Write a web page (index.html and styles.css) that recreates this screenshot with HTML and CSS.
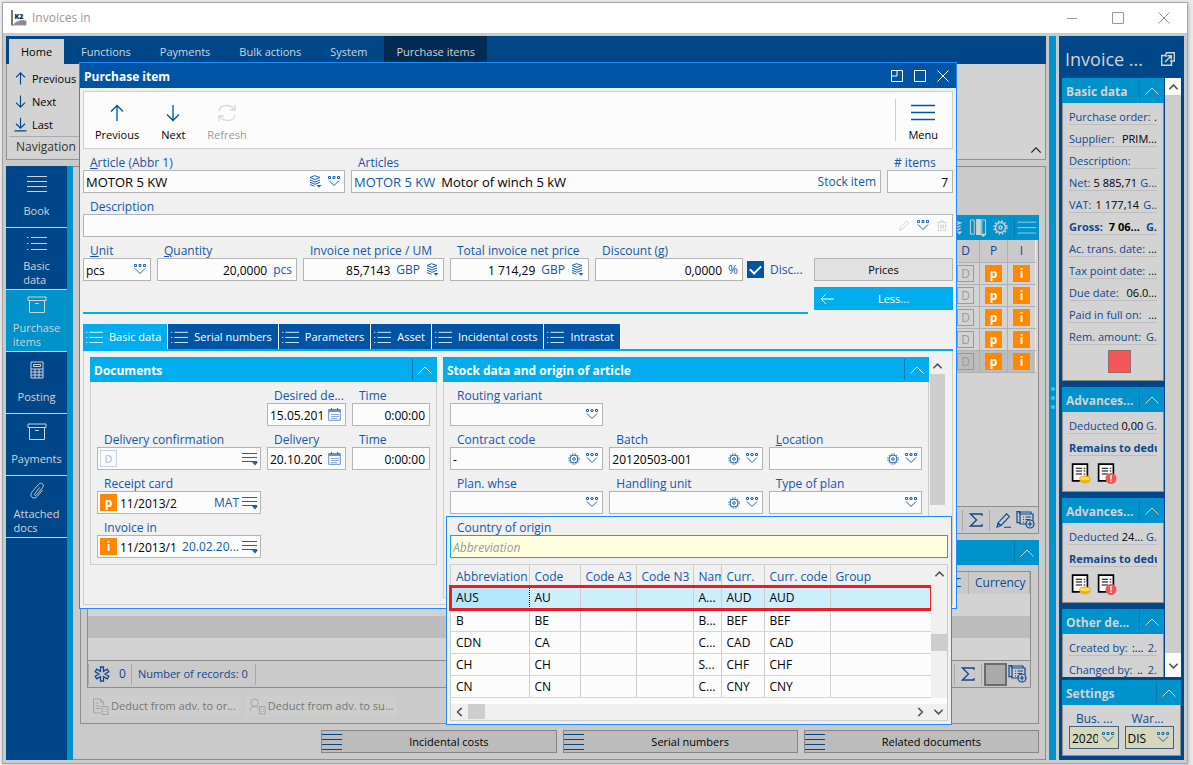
FILE: index.html
```html
<!DOCTYPE html>
<html lang="en">
<head>
<meta charset="utf-8">
<title>Invoices in</title>
<link rel="stylesheet" href="styles.css">
</head>
<body>
<svg class="defs" aria-hidden="true">
  <symbol id="up" viewBox="0 0 20 20"><path d="M10 18V2.500M4 8.500 10 2.500 16 8.500"/></symbol>
  <symbol id="down" viewBox="0 0 20 20"><path d="M10 2v15.500M4 11.500 10 17.500 16 11.500"/></symbol>
  <symbol id="last" viewBox="0 0 20 20"><path d="M10 1v13.500M4 9 10 15 16 9M2 18.500h16"/></symbol>
  <symbol id="left" viewBox="0 0 14 14"><path d="M14 7H1M6 2 1 7 6 12"/></symbol>
  <symbol id="refresh" viewBox="0 0 20 20"><path d="M2 8C3 1.500 13 .500 17 6.500M18 2v5h-5M18 12c-1 6.500-11 7.500-15 1.500M2 18v-5h5"/></symbol>
  <symbol id="lines" viewBox="0 0 24 18"><path d="M0 1.500h24M0 8.500h24M0 15.500h24"/></symbol>
  <symbol id="lines4" viewBox="0 0 20 18"><path d="M0 1.500h20M0 6.500h20M0 11.500h20M0 16.500h20"/></symbol>
  <symbol id="list" viewBox="0 0 20 14"><path d="M4 1.500h16M4 7.500h16M4 13.500h16M0 1.500h1.500M0 7.500h1.500M0 13.500h1.500"/></symbol>
  <symbol id="box" viewBox="0 0 20 18"><path d="M1 1h18v3.500H1zM2.500 4.500v12h15v-12M8 7.500h4"/></symbol>
  <symbol id="calc" viewBox="0 0 14 18"><path d="M1 1h12v16H1zM3.500 3.500h7v2h-7zM1 8h12M1 11h12M1 14h12M5 8v9M9 8v9"/></symbol>
  <symbol id="clip" viewBox="0 0 18 20"><path d="M12 6 6.500 13c-1 1.300.800 2.800 1.900 1.500L15 6.500c3-3.500-1.500-7-4.300-3.800L3.500 11c-4 4.800 2 9.500 5.800 5l6-7.200"/></symbol>
  <symbol id="chev" viewBox="0 0 14 8"><path d="M.500 7.500 7 1l6.500 6.500"/></symbol>
  <symbol id="drop" viewBox="0 0 12 11"><path d="M.500.500h2v2h-2zM5 .500h2v2H5zM9.500.500h2v2h-2zM1 4.500l5 5 5-5"/></symbol>
  <symbol id="stack" viewBox="0 0 13 13"><path d="M1 2.500 5.500.700 11 2.500 6 4.500zM1 5l5 2 5-2M1 7.300l5 2 5-2M1 9.500l4.500 1.800"/><path class="solid" d="M7.500 10h5L10 12.800z"/></symbol>
  <symbol id="gear" viewBox="0 0 12 12"><circle cx="6" cy="6" r="4"/><circle cx="6" cy="6" r="1.300"/><circle cx="6" cy="6" r="5.200" stroke-dasharray="1.360 1.360"/></symbol>
  <symbol id="cal" viewBox="0 0 13 13"><path fill="#fcfcfc" stroke="#5f93cc" d="M.700 1.700h11.600v10.600H.700z"/><path fill="#5f93cc" stroke="none" d="M.500 1h12v3H.500z"/><path d="M3.500 0v2M9.500 0v2" /><path stroke-dasharray="1 1" d="M3.500 6.500h7M3.500 8.500h7M3.500 10.500h5"/></symbol>
  <symbol id="menu" viewBox="0 0 16 14"><path d="M0 1.500h15M0 5.500h15M0 9.500h15"/><path class="solid" d="M10 10h6l-3 3.500z"/></symbol>
  <symbol id="pencil" viewBox="0 0 12 12"><path d="M1 11l.800-3L9 1l2 2-7.200 7.200z"/></symbol>
  <symbol id="trash" viewBox="0 0 10 12"><path d="M0 2.500h10M3.500 2V.700h3V2M1 2.500v9h8v-9M3.500 5v4.500M5 5v4.500M6.500 5v4.500"/></symbol>
  <symbol id="sum" viewBox="0 0 14 14"><path d="M13 3V1H1.500l6 6-6 6H13v-2"/></symbol>
  <symbol id="edit" viewBox="0 0 15 15"><path d="M1 14l1-4L10.500.800l3 2.700L5 12.500zM2 10l3 2.500M8 14.300h7"/></symbol>
  <symbol id="copy" viewBox="0 0 19 18"><path d="M3.500 3V.700H1v11h2.500M4 3h13v10H4zM4 3V1h11v2M7 6h1M9.500 6H15M7 8.500h1M9.500 8.500H14M7 11h1M9.500 11H12"/><circle cx="14" cy="13" r="4" class="hole"/><path d="M14 10.500v5M11.500 13h5"/></symbol>
  <symbol id="star" viewBox="0 0 16 16"><path d="M6.500 1h3v4.400l3.800-2.200 1.500 2.600L11 8l3.800 2.200-1.500 2.600-3.800-2.200V15h-3v-4.400l-3.800 2.200-1.500-2.600L5 8 1.200 5.800l1.500-2.600 3.800 2.200z"/></symbol>
  <symbol id="doc" viewBox="0 0 16 17"><path d="M8 15H1V1h7l3 3v3M8 1v3h3M3 5h3M3 8h5M3 10.500h5M9.500 8.500h6v8h-6zM11 11h1M13 11h1M11 13.500h1M13 13.500h1"/></symbol>
  <symbol id="person" viewBox="0 0 18 17"><circle cx="6" cy="4.500" r="4"/><path d="M1 13c0-3 2-4.500 5-4.500s3.500 1 4 2M11 8.500h6v8h-6zM12.500 11h1M14.500 11h1M12.500 13.500h1M14.500 13.500h1"/></symbol>
  <symbol id="note" viewBox="0 0 16 18"><path d="M1 1h14v16H1z" fill="#fff" stroke="#000" stroke-width="1.600"/><path stroke="#000" d="M4 5h6M11.500 5H13M4 7.500h6M11.500 7.500H13M4 10.500h6M11.500 10.500H13"/></symbol>
  <symbol id="x" viewBox="0 0 12 12"><path d="M.500.500l11 11M11.500.500l-11 11"/></symbol>
  <symbol id="sq" viewBox="0 0 12 12"><path d="M.500.500h11v11H.500z"/></symbol>
  <symbol id="dock" viewBox="0 0 12 12"><path d="M.500.500h11v11H.500zM6 1v5H1"/></symbol>
  <symbol id="min" viewBox="0 0 12 12"><path d="M1 6.500h10"/></symbol>
  <symbol id="cols" viewBox="0 0 18 19"><path d="M1 1h4v15H1zM13 1h4v15h-4z"/><path class="solid" d="M7 0h5v17H7zM11 16h7l-3.500 3z"/></symbol>
  <symbol id="out" viewBox="0 0 14 14"><path d="M5 3.500H.700v9.800h9.800V9M5 .700h8.300V9H9M5 5V.700M4 10l6-6M6.500 3.700h3.800v3.800"/></symbol>
</svg>

<div class="window">
  <header class="titlebar">
    <svg class="logo" viewBox="0 0 16 16"><path d="M1 0v15.500" stroke="#777" stroke-width="2"/><path d="M2 15q6-6 13-4v4z" fill="#888"/><text x="3.500" y="9" font-size="7">K2</text></svg>
    <span class="apptitle">Invoices in</span>
    <button aria-label="Minimise"><svg><use href="#min"/></svg></button>
    <button aria-label="Maximise"><svg><use href="#sq"/></svg></button>
    <button aria-label="Close"><svg><use href="#x"/></svg></button>
  </header>

  <div class="client">
    <div class="main">
      <nav class="tabs">
        <button class="home">Home</button><button>Functions</button><button>Payments</button><button>Bulk actions</button><button>System</button><button class="current">Purchase items</button>
      </nav>
      <div class="ribbon">
        <div class="navgroup">
          <button><svg><use href="#up"/></svg>Previous</button>
          <button><svg><use href="#down"/></svg>Next</button>
          <button><svg><use href="#last"/></svg>Last</button>
          <span class="caption">Navigation</span>
        </div>
        <button class="fold" aria-label="Collapse"><svg><use href="#chev"/></svg></button>
      </div>

      <div class="workspace">
        <nav class="sidenav">
          <button><svg><use href="#lines4"/></svg><span>Book</span></button>
          <button class="two"><svg><use href="#list"/></svg><span>Basic<br>data</span></button>
          <button class="two on"><svg><use href="#box"/></svg><span>Purchase<br>items</span></button>
          <button><svg><use href="#calc"/></svg><span>Posting</span></button>
          <button><svg><use href="#box"/></svg><span>Payments</span></button>
          <button class="two"><svg><use href="#clip"/></svg><span>Attached<br>docs</span></button>
        </nav>
        <section class="content">
          <div class="upper">
            <div class="bar tools">
              <svg class="i15"><use href="#stack"/></svg><svg class="cols"><use href="#cols"/></svg><svg class="i15"><use href="#gear"/></svg><span class="more"><svg class="i20"><use href="#lines"/></svg></span>
            </div>
            <div class="body">
              <table class="items">
                <thead><tr><th></th><th>D</th><th>P</th><th>I</th></tr></thead>
                <tbody>
                  <tr><td></td><td><b class="tag d">D</b></td><td><b class="tag">p</b></td><td><b class="tag">i</b></td></tr>
                  <tr><td></td><td><b class="tag d">D</b></td><td><b class="tag">p</b></td><td><b class="tag">i</b></td></tr>
                  <tr><td></td><td><b class="tag d">D</b></td><td><b class="tag">p</b></td><td><b class="tag">i</b></td></tr>
                  <tr><td></td><td><b class="tag d">D</b></td><td><b class="tag">p</b></td><td><b class="tag">i</b></td></tr>
                  <tr class="sel"><td></td><td><b class="tag d">D</b></td><td><b class="tag">p</b></td><td><b class="tag">i</b></td></tr>
                </tbody>
              </table>
              <div class="status end">
                <span class="cell"><svg class="i14"><use href="#sum"/></svg></span>
                <span class="cell"><svg class="i15"><use href="#edit"/></svg></span>
                <svg class="i19"><use href="#copy"/></svg>
              </div>
            </div>
          </div>
          <div class="lower">
            <div class="bar"><span class="fill"></span><button class="chevbtn" aria-label="Collapse"><svg><use href="#chev"/></svg></button></div>
            <div class="body">
              <div class="grid">
                <table class="plain">
                  <thead><tr><th></th><th class="c">C</th><th class="cur">Currency</th></tr></thead>
                  <tbody><tr><td colspan="3"></td></tr><tr class="sel"><td colspan="3"></td></tr><tr><td colspan="3"></td></tr></tbody>
                </table>
                <div class="status">
                  <span class="cell count"><svg class="i16"><use href="#star"/></svg>0</span>
                  <span class="cell records">Number of records: 0</span>
                  <span class="fill endcell"></span>
                  <span class="cell"><svg class="i14"><use href="#sum"/></svg></span>
                  <span class="cell swatch"><i></i></span>
                  <svg class="i19"><use href="#copy"/></svg>
                </div>
              </div>
              <div class="deduct">
                <button disabled><svg><use href="#doc"/></svg>Deduct from adv. to or...</button>
                <button disabled><svg><use href="#person"/></svg>Deduct from adv. to su...</button>
              </div>
            </div>
          </div>
          <div class="links">
            <span></span>
            <button><svg><use href="#lines4"/></svg>Incidental costs</button>
            <button><svg><use href="#lines4"/></svg>Serial numbers</button>
            <button><svg><use href="#lines4"/></svg>Related documents</button>
          </div>
        </section>
      </div>
    </div>

    <div class="splitter"><i></i><i></i><i></i></div>

    <aside class="preview">
      <div class="ptitle"><span>Invoice ...</span><button aria-label="Open"><svg><use href="#out"/></svg></button></div>
      <div class="pscroll">
        <div class="plist">
          <section class="block">
            <div class="bar"><h2>Basic data</h2><button class="chevbtn" aria-label="Collapse"><svg><use href="#chev"/></svg></button></div>
            <div class="rows">
              <p>Purchase order: <em>.</em></p><p>Supplier: <em>PRIM...</em></p><p>Description:</p>
              <p>Net: <em>5 885,71</em> <u>G...</u></p><p>VAT: <em>1 177,14</em> <u>G..</u></p><p class="strong">Gross: <em>7 06...</em> <u>G.</u></p>
              <p>Ac. trans. date: <em>...</em></p><p>Tax point date: <em>...</em></p><p>Due date: <em>06.0...</em></p>
              <p>Paid in full on: <em>...</em></p><p>Rem. amount: <u>G.</u></p>
              <i class="red"></i>
            </div>
          </section>
          <section class="block">
            <div class="bar"><h2>Advances...</h2><button class="chevbtn" aria-label="Collapse"><svg><use href="#chev"/></svg></button></div>
            <div class="rows">
              <p>Deducted <em>0,00</em> <u>G.</u></p><p class="strong">Remains to deduct</p>
              <div class="notes"><svg viewBox="0 0 20 21"><use href="#note" width="18" height="19"/><ellipse cx="14" cy="18" rx="5.500" ry="2.500" fill="#f0b41c"/><ellipse cx="14" cy="15.500" rx="5.500" ry="2.500" fill="#ffe04a" stroke="#e2a818"/></svg><svg viewBox="0 0 20 21"><use href="#note" width="18" height="19"/><circle cx="14" cy="15.500" r="5.500" fill="#f45656"/><path d="M14 12v4.500M14 17.500v1.500" stroke="#fff" stroke-width="1.500"/></svg></div>
            </div>
          </section>
          <section class="block">
            <div class="bar"><h2>Advances...</h2><button class="chevbtn" aria-label="Collapse"><svg><use href="#chev"/></svg></button></div>
            <div class="rows">
              <p>Deducted <em>24...</em> <u>G.</u></p><p class="strong">Remains to deduct</p>
              <div class="notes"><svg viewBox="0 0 20 21"><use href="#note" width="18" height="19"/><ellipse cx="14" cy="18" rx="5.500" ry="2.500" fill="#f0b41c"/><ellipse cx="14" cy="15.500" rx="5.500" ry="2.500" fill="#ffe04a" stroke="#e2a818"/></svg><svg viewBox="0 0 20 21"><use href="#note" width="18" height="19"/><circle cx="14" cy="15.500" r="5.500" fill="#f45656"/><path d="M14 12v4.500M14 17.500v1.500" stroke="#fff" stroke-width="1.500"/></svg></div>
            </div>
          </section>
          <section class="block">
            <div class="bar"><h2>Other de...</h2><button class="chevbtn" aria-label="Collapse"><svg><use href="#chev"/></svg></button></div>
            <div class="rows"><p>Created by: <em>:...</em> <u>2.</u></p><p>Changed by: <em>..</em> <u>2.</u></p></div>
          </section>
        </div>
        <div class="vbar dim"><svg><use href="#chev"/></svg><i></i><svg class="dn"><use href="#chev"/></svg></div>
      </div>
      <section class="block settings">
        <div class="bar"><h2>Settings</h2><button class="chevbtn" aria-label="Collapse"><svg><use href="#chev"/></svg></button></div>
        <div class="pair">
          <div class="field"><label for="bus">Bus. ...</label><div class="box"><input id="bus" value="2020"><svg class="drop"><use href="#drop"/></svg></div></div>
          <div class="field"><label for="war">War...</label><div class="box"><input id="war" value="DIS"><svg class="drop"><use href="#drop"/></svg></div></div>
        </div>
      </section>
    </aside>
  </div>
</div>

<div class="dialog" role="dialog" aria-labelledby="dtitle">
  <header class="dhead">
    <h1 id="dtitle">Purchase item</h1>
    <button aria-label="Dock"><svg><use href="#dock"/></svg></button>
    <button aria-label="Maximise"><svg><use href="#sq"/></svg></button>
    <button aria-label="Close"><svg><use href="#x"/></svg></button>
  </header>
  <div class="dbody">
    <div class="toolbar">
      <button><svg><use href="#up"/></svg>Previous</button>
      <button><svg><use href="#down"/></svg>Next</button>
      <button disabled><svg><use href="#refresh"/></svg>Refresh</button>
      <button class="menu"><svg><use href="#lines"/></svg>Menu</button>
    </div>

    <div class="row r1">
      <div class="field"><label for="art"><u>A</u>rticle (Abbr 1)</label><div class="box"><input class="wide" id="art" value="MOTOR 5 KW"><svg class="i13"><use href="#stack"/></svg><svg class="drop"><use href="#drop"/></svg></div></div>
      <div class="field"><label for="arts">Articles</label><div class="box"><span class="blue wide">MOTOR 5 KW</span><input class="wide" id="arts" value="Motor of winch 5 kW"><span class="blue">Stock item</span></div></div>
      <div class="field"><label for="cnt"># items</label><div class="box"><input class="num" id="cnt" value="7"></div></div>
    </div>
    <div class="row">
      <div class="field"><label for="desc">Description</label><div class="box tools3"><input id="desc"><svg class="drop faint"><use href="#pencil"/></svg><svg class="drop"><use href="#drop"/></svg><svg class="drop faint"><use href="#trash"/></svg></div></div>
    </div>
    <div class="pricing">
      <div class="values">
        <div class="row r3">
          <div class="field"><label for="unit"><u>U</u>nit</label><div class="box"><input id="unit" value="pcs"><svg class="drop"><use href="#drop"/></svg></div></div>
          <div class="field"><label for="qty"><u>Q</u>uantity</label><div class="box"><input class="num" id="qty" value="20,0000"><span class="blue">pcs</span></div></div>
          <div class="field"><label for="inp">Invoice net price / UM</label><div class="box"><input class="num" id="inp" value="85,7143"><span class="blue">GBP</span><svg class="i13"><use href="#stack"/></svg></div></div>
          <div class="field"><label for="tot">Total invoice net price</label><div class="box"><input class="num" id="tot" value="1 714,29"><span class="blue">GBP</span><svg class="i13"><use href="#stack"/></svg></div></div>
          <div class="field"><label for="dis">Discount (<u>g</u>)</label><div class="box"><input class="num" id="dis" value="0,0000"><span class="blue">%</span></div></div>
          <label class="check"><input type="checkbox" checked>Disc...</label>
        </div>
      </div>
      <div class="actions"><button class="prices">Prices</button><button class="less"><svg><use href="#left"/></svg>Less...</button></div>
    </div>

    <nav class="dtabs">
      <button class="on"><svg><use href="#list"/></svg>Basic data</button><button><svg><use href="#list"/></svg>Serial numbers</button><button><svg><use href="#list"/></svg>Parameters</button><button><svg><use href="#list"/></svg>Asset</button><button><svg><use href="#list"/></svg>Incidental costs</button><button><svg><use href="#list"/></svg>Intrastat</button>
    </nav>

    <div class="page">
      <section class="panel docs">
        <div class="bar"><h2>Documents</h2><button class="chevbtn" aria-label="Collapse"><svg><use href="#chev"/></svg></button></div>
        <div class="cells">
          <span></span>
          <div class="field"><label for="dd">Desired de...</label><div class="box"><input id="dd" value="15.05.2013"><svg class="i13"><use href="#cal"/></svg></div></div>
          <div class="field"><label for="t1">Time</label><div class="box"><input class="num" id="t1" value="0:00:00"></div></div>
          <div class="field"><label for="dc">Delivery confirmation</label><div class="box tagged"><b class="tag light">D</b><input id="dc"><svg class="menu16"><use href="#menu"/></svg></div></div>
          <div class="field"><label for="dl">Delivery</label><div class="box"><input id="dl" value="20.10.2009"><svg class="i13"><use href="#cal"/></svg></div></div>
          <div class="field"><label for="t2">Time</label><div class="box"><input class="num" id="t2" value="0:00:00"></div></div>
          <div class="field first"><label for="rc">Receipt card</label><div class="box tagged"><b class="tag">p</b><input id="rc" value="11/2013/2"><span class="blue">MAT</span><svg class="menu16"><use href="#menu"/></svg></div></div>
          <div class="field first"><label for="ii">Invoice in</label><div class="box tagged"><b class="tag">i</b><input id="ii" value="11/2013/1"><span class="blue">20.02.20...</span><svg class="menu16"><use href="#menu"/></svg></div></div>
        </div>
      </section>
      <section class="panel stock">
        <div class="bar"><h2>Stock data and origin of article</h2><button class="chevbtn" aria-label="Collapse"><svg><use href="#chev"/></svg></button></div>
        <div class="cells">
          <div class="field"><label for="rv">Routing variant</label><div class="box"><input id="rv"><svg class="drop"><use href="#drop"/></svg></div></div>
          <div class="field first"><label for="cc">Contract code</label><div class="box"><input id="cc" value="-"><svg class="gear"><use href="#gear"/></svg><svg class="drop"><use href="#drop"/></svg></div></div>
          <div class="field"><label for="ba">Batch</label><div class="box"><input id="ba" value="20120503-001"><svg class="gear"><use href="#gear"/></svg><svg class="drop"><use href="#drop"/></svg></div></div>
          <div class="field"><label for="lo"><u>L</u>ocation</label><div class="box"><input id="lo"><svg class="gear"><use href="#gear"/></svg><svg class="drop"><use href="#drop"/></svg></div></div>
          <div class="field"><label for="pw">Plan. whse</label><div class="box"><input id="pw"><svg class="drop"><use href="#drop"/></svg></div></div>
          <div class="field"><label for="hu">Handling unit</label><div class="box"><input id="hu"><svg class="gear"><use href="#gear"/></svg><svg class="drop"><use href="#drop"/></svg></div></div>
          <div class="field"><label for="tp">Type of plan</label><div class="box"><input id="tp"><svg class="drop"><use href="#drop"/></svg></div></div>
        </div>
      </section>
      <div class="vbar pagebar"><svg><use href="#chev"/></svg><i></i></div>

      <div class="popup">
        <div class="field"><label for="co">Country of origin</label><div class="box focus"><input id="co" placeholder="Abbreviation"></div></div>
        <div class="lookup">
          <div class="lrow">
            <table class="countries">
              <colgroup><col class="w78"><col class="w51"><col class="w56"><col class="w57"><col class="w28"><col class="w43"><col class="w66"><col></colgroup>
              <thead><tr><th>Abbreviation</th><th>Code</th><th>Code A3</th><th>Code N3</th><th>Name</th><th>Curr.</th><th>Curr. code</th><th>Group</th></tr></thead>
              <tbody>
                <tr class="picked"><td>AUS</td><td>AU</td><td></td><td></td><td>A...</td><td>AUD</td><td>AUD</td><td></td></tr>
                <tr><td>B</td><td>BE</td><td></td><td></td><td>B...</td><td>BEF</td><td>BEF</td><td></td></tr>
                <tr><td>CDN</td><td>CA</td><td></td><td></td><td>C...</td><td>CAD</td><td>CAD</td><td></td></tr>
                <tr><td>CH</td><td>CH</td><td></td><td></td><td>S...</td><td>CHF</td><td>CHF</td><td></td></tr>
                <tr><td>CN</td><td>CN</td><td></td><td></td><td>C...</td><td>CNY</td><td>CNY</td><td></td></tr>
              </tbody>
            </table>
            <div class="vbar mid"><svg><use href="#chev"/></svg><i></i></div>
          </div>
          <div class="hbar"><svg class="lt"><use href="#chev"/></svg><i></i><span class="fill"></span><svg class="rt"><use href="#chev"/></svg><svg class="dn"><use href="#chev"/></svg></div>
        </div>
      </div>
    </div>
  </div>
</div>
</body>
</html>
```
FILE: styles.css
```css
:root {
  --navy: #00478a;
  --cyan: #0092cb;
  --ink: #0f4790;
  --blue: #0054a6;
  --sky: #00aeef;
  --label: #1257a9;
}
* { box-sizing: border-box; margin: 0; padding: 0; }
body {
  min-height: 100vh;
  display: flex;
  position: relative;
  background: #ececec;
  color: #000;
  font: 12px/16px "Open Sans", "Noto Sans", sans-serif;
}
button, input { font: inherit; color: inherit; border: 0; background: none; border-radius: 0; }
svg { fill: none; stroke: currentColor; flex: none; display: block; }
i, em { font-style: normal; }
.solid { fill: currentColor; stroke: none; }
.hole { fill: #cacaca; }
.defs { position: absolute; width: 0; height: 0; }
.fill { flex: 1; }

/* main window */
.window {
  flex: 1;
  min-width: 0;
  margin: 2px 5px 2px 2px;
  display: flex;
  flex-direction: column;
  border: 1px solid #a6a6a6;
  background: #cacaca;
  box-shadow: 1px 1px 4px #bbb;
}
.titlebar { height: 30px; background: #fff; display: flex; align-items: center; padding: 0 0 0 8px; color: #999; }
.titlebar button { width: 46px; display: flex; justify-content: center; }
.titlebar button svg { width: 12px; height: 12px; }
.logo { width: 16px; height: 16px; }
.logo text { fill: #222; stroke: none; font-weight: 800; }
.apptitle { flex: 1; padding-left: 5px; }
.client { flex: 1; display: flex; gap: 3px; padding: 3px; min-height: 0; }
.main { flex: 1; min-width: 0; display: flex; flex-direction: column; }

.tabs { background: var(--navy); height: 28px; display: flex; align-items: flex-end; padding-left: 3px; color: #cfd6dd; font-size: 11px; }
.tabs button { height: 25px; padding: 1px 12px 0; margin-right: 5px; }
.tabs .home { background: #d3d3d3; color: #000; }
.tabs .current { background: #002b52; color: #d3d3d3; height: 28px; margin: 0; padding: 4px 12px 0; }
.ribbon { height: 96px; margin-bottom: 6px; display: flex; justify-content: space-between; align-items: flex-end; background: #d3d3d3; border: 1px solid #929292; border-top: 0; }
.navgroup { display: flex; flex-direction: column; padding: 3px 2px 2px; align-self: flex-start; font-size: 11px; }
.navgroup button { display: flex; align-items: center; gap: 4px; height: 23px; padding-left: 4px; }
.navgroup svg { width: 15px; height: 15px; color: var(--navy); stroke-width: 1.5; }
.navgroup .caption { border-top: 1px solid #aaa; padding: 2px 7px; color: #333; font-size: 12px; }
.fold { padding: 0 4px 6px; }
.fold svg { width: 10px; height: 6px; stroke-width: 1.5; color: #222; }

.workspace { flex: 1; display: flex; min-height: 0; }
.sidenav { width: 67px; background: var(--navy); border-right: 6px solid var(--cyan); color: #d3d3d3; font-size: 11px; }
.sidenav button { width: 100%; height: 62px; display: flex; flex-direction: column; align-items: center; gap: 11px; padding-top: 9px; border-bottom: 1px solid #d3d3d3; line-height: 14px; text-align: left; }
.sidenav svg { width: 20px; height: 18px; }
.sidenav .two { padding-top: 6px; gap: 7px; }
.sidenav .on { background: var(--cyan); }
.content { flex: 1; min-width: 0; display: flex; flex-direction: column; gap: 6px; padding: 48px 6px 6px 7px; border: 1px solid #8d8d8d; border-left: 0; }

.bar { height: 25px; display: flex; align-items: center; background: var(--cyan); color: #d3d3d3; padding-left: 4px; }
.bar h2 { flex: 1; font-size: 12px; line-height: 18px; padding-top: 2px; font-weight: 700; white-space: nowrap; overflow: hidden; }
.chevbtn { width: 25px; height: 21px; display: grid; place-items: center; border-left: 1px solid #007ab0; }
.chevbtn svg { width: 14px; height: 8px; }
.tools { justify-content: flex-end; gap: 6px; padding-right: 2px; }
.more { border-left: 1px solid #007ab0; padding: 3px 0 3px 2px; }
.cols { width: 18px; height: 18px; }
.i13 { width: 13px; height: 13px; }
.i14 { width: 14px; height: 14px; stroke-width: 1.3; }
.i15 { width: 15px; height: 15px; stroke-width: 1.1; }
.i16 { width: 16px; height: 16px; stroke-width: 1.3; }
.i19 { width: 19px; height: 18px; stroke-width: 1.2; }
.i20 { width: 20px; height: 14px; }
.upper, .lower { display: flex; flex-direction: column; }
.upper { flex: 1; }
.upper .body { flex: 1; display: flex; flex-direction: column; justify-content: space-between; background: #d3d3d3; border: 1px solid #8d8d8d; border-top: 0; }
table { border-collapse: collapse; table-layout: fixed; width: 100%; }
.items { width: calc(100% - 2px); color: var(--ink); border-right: 1px solid #eee; }
.items th, .items td { height: 22px; width: 28px; border-bottom: 1px solid #b0b0b0; border-left: 1px solid #b0b0b0; text-align: center; font-weight: 400; }
.items th { background: #cacaca; }
.items th:first-child { width: auto; }
.sel { background: #bcbcbc; }
.tag { display: block; width: 17px; height: 17px; margin: 0 auto; flex: none; background: #f80; color: #fff; text-align: center; font-size: 12px; line-height: 17px; font-weight: 700; }
.tag.d { background: none; border: 1px solid #9a9a9a; color: #9a9a9a; line-height: 15px; font-weight: 400; }
.tag.light { background: none; border: 1px solid #c3d3e8; color: #b9cde8; line-height: 15px; font-weight: 600; font-size: 11px; }
.status { display: flex; align-items: center; height: 27px; border-top: 1px solid #8d8d8d; background: #cacaca; color: var(--ink); padding-right: 3px; }
.status.end { justify-content: flex-end; }
.status .cell { height: 21px; display: flex; align-items: center; justify-content: center; width: 27px; border-left: 1px solid #a8a8a8; }
.status .count { width: 43px; gap: 9px; }
.status .records { width: auto; padding: 0 7px 0 6px; font-size: 11px; }
.status .endcell { border-left: 1px solid #a8a8a8; height: 21px; }
.swatch i { width: 23px; height: 23px; flex: none; background: #aaa; border: 2px solid #6b6b6b; }
.lower .body { border: 1px solid #8d8d8d; border-top: 0; padding: 6px 7px 6px 6px; }
.grid { border: 1px solid #8d8d8d; background: #d3d3d3; }
.plain th { height: 22px; background: #cacaca; color: var(--ink); font-weight: 400; border-right: 1px solid #b0b0b0; text-align: left; padding-left: 6px; }
.plain .c { width: 21px; }
.plain .cur { width: 61px; }
.plain td { height: 22px; }
.deduct { display: flex; gap: 7px; padding: 7px 2px 0; color: #777; font-size: 11px; }
.deduct button { display: flex; align-items: center; gap: 2px; padding: 0 3px; height: 22px; background: #cdcdcd; }
.deduct svg { width: 17px; height: 17px; color: #a2a2a2; }
.links { display: grid; grid-template-columns: repeat(4, 1fr); gap: 6px; }
.links button { height: 23px; display: flex; align-items: center; background: #bcbcbc; border: 1px solid #858585; font-size: 11px; }
.links svg { width: 20px; height: 18px; margin-right: auto; color: var(--navy); }
.links button::after { content: ""; margin-left: auto; }

.splitter { width: 7px; background: var(--cyan); display: flex; flex-direction: column; gap: 5px; align-items: center; justify-content: center; }
.splitter i { width: 4px; height: 4px; border-radius: 2px; background: #3fc4ff; }

/* preview column */
.preview { width: 125px; background: var(--navy); padding: 0 3px 4px; display: flex; flex-direction: column; color: var(--ink); }
.ptitle { height: 42px; flex: none; display: flex; align-items: center; justify-content: space-between; color: #d3d3d3; font-size: 18px; padding: 3px 6px 0 3px; white-space: nowrap; }
.ptitle svg { width: 14px; height: 14px; stroke-width: 1.4; }
.pscroll { display: flex; height: 599px; gap: 1px; margin-bottom: 3px; }
.plist { flex: 1; min-width: 0; overflow: hidden; }
.block { margin-bottom: 6px; }
.block .bar { padding-left: 4px; }
.block .chevbtn { width: 25px; }
.rows { background: #d3d3d3; border: 1px solid #8d8d8d; border-top: 0; padding: 3px 6px 6px; }
.rows p { height: 19px; margin-bottom: 3px; border-bottom: 1px solid #bdbdbd; line-height: 21px; display: flex; justify-content: space-between; white-space: nowrap; overflow: hidden; font-size: 11px; }
.rows em { color: #000; }
.rows u { text-decoration: none; }
.strong { font-weight: 700; }
.red { display: block; width: 23px; height: 23px; margin: 5px 26px 1px auto; background: #f55656; border: 1px solid #8f6a6a; }
.notes { display: flex; gap: 6px; padding: 4px 0 1px 2px; }
.notes svg { width: 20px; height: 21px; stroke: none; }
.settings { margin: 0; }
.settings .field .box { background: #d7d8bb; border-color: #44617c; }
.pair { display: grid; grid-template-columns: 1fr 1fr; gap: 6px; padding: 0 6px; padding-bottom: 6px; background: #d3d3d3; border: 1px solid #8d8d8d; border-top: 0; color: #000; }
.pair .field label { color: var(--ink); }

.vbar { width: 15px; flex: none; background: #f0f0f0; display: flex; flex-direction: column; align-items: center; color: #555; }
.vbar svg, .hbar svg { width: 9px; height: 6px; margin: 6px 0 5px; stroke-width: 2.5; overflow: visible; }
.vbar i { width: 100%; background: #cdcdcd; flex: 1; }
.vbar .dn, .hbar .dn { transform: rotate(180deg); }
.dim { background: #fafafa; width: 16px; }
.dim .dn { margin: 10px 0 8px; }

/* fields */
.field { min-width: 0; display: flex; flex-direction: column; }
.field label { height: 21px; line-height: 28px; padding-left: 7px; color: var(--label); white-space: nowrap; overflow: visible; }
.box { height: 23px; display: flex; align-items: center; gap: 6px; padding: 0 4px 0 2px; border: 1px solid #b4b4b4; background: #fcfcfc; color: #000; }
.box input { flex: 1; min-width: 0; width: 0; height: 21px; padding-top: 1px; outline: 0; }
.box svg { color: #1a63b3; }
.box .blue { color: var(--label); padding-top: 1px; }
.box .wide { font-size: 13px; }
.num { text-align: right; }
.drop { width: 12px; height: 11px; }
.gear { width: 12px; height: 12px; }
.menu16 { width: 16px; height: 14px; }
.box .faint { color: #d0d0d0; }
.tools3 { gap: 7px; }
.box.tagged { gap: 3px; padding: 0 2px; }
.settings .box { gap: 4px; }

/* dialog */
.dialog { position: absolute; top: 62px; left: 79px; right: 236px; background: #f0f0f0; border: 1px solid #1e8cff; }
.dhead { height: 25px; display: flex; align-items: center; gap: 11px; padding: 0 7px 0 4px; background: var(--blue); color: #fff; }
.dhead h1 { flex: 1; font-size: 12px; padding-top: 2px; font-weight: 700; }
.dhead svg { width: 12px; height: 12px; }
.dbody { padding: 3px; }
.toolbar { height: 58px; display: flex; border: 1px solid #cdcdcd; background: #fcfcfc; padding: 7px 4px; font-size: 11px; }
.toolbar button { display: flex; flex-direction: column; align-items: center; gap: 4px; padding: 4px 7px 0; margin-right: 8px; }
.toolbar svg { width: 20px; height: 20px; color: var(--blue); stroke-width: 1.3; }
.toolbar button:disabled { color: #999; }
.toolbar button:disabled svg { color: #d6d6d6; }
.toolbar .menu { margin: 0 0 0 auto; padding-left: 12px; padding-right: 10px; border-left: 1px solid #cdcdcd; }
.toolbar .menu svg { width: 24px; }
.row { display: grid; gap: 6px; }
.r1 { grid-template-columns: 262fr 530fr 66fr; }
.r3 { grid-template-columns: 68fr 140fr 141fr 139fr 148fr 59fr; }
.pricing { display: grid; grid-template-columns: 1fr 139px; gap: 6px; }
.values { border-bottom: 2px solid var(--sky); height: 77px; }
.check { display: flex; align-items: center; gap: 6px; height: 23px; margin: 21px 0 0 -2px; color: var(--label); white-space: nowrap; }
.check input { appearance: none; width: 17px; height: 17px; flex: none; background: var(--blue); display: grid; place-items: center; }
.check input::after { content: ""; width: 9px; height: 5px; margin-top: -3px; border: solid #fff; border-width: 0 0 2px 2px; transform: rotate(-45deg); }
.actions { display: flex; flex-direction: column; gap: 6px; padding-top: 21px; font-size: 11px; }
.actions button { height: 23px; }
.prices { background: #e1e1e1; border: 1px solid #b4b4b4; }
.actions .less { background: var(--sky); color: #fff; display: flex; align-items: center; padding: 0 0 0 6px; }
.less svg { width: 14px; height: 14px; margin-right: auto; }
.less::after { content: ""; margin-left: auto; }
.dtabs { display: flex; gap: 1px; margin-top: 10px; border-bottom: 2px solid var(--sky); color: #fff; font-size: 11px; }
.dtabs button { height: 25px; display: flex; align-items: center; gap: 6px; padding: 1px 6px 0 3px; background: var(--blue); white-space: nowrap; box-shadow: 1px 0 #fff; }
.dtabs .on { background: var(--sky); }
.dtabs svg { width: 17px; height: 12px; }
.page { position: relative; display: flex; height: 254px; padding: 6px 7px 0 6px; border: 1px solid #cdcdcd; border-top: 0; }
.panel .bar { background: var(--sky); color: #fff; }
.panel .cells { border: 1px solid #cdcdcd; border-top: 0; display: grid; column-gap: 6px; padding: 0 6px 6px; }
.docs { flex: 0 0 347px; margin-right: 6px; }
.docs .cells { grid-template-columns: 164fr 79fr 78fr; }
.stock { flex: 1; min-width: 0; }
.stock .cells { grid-template-columns: repeat(3, 1fr); height: 216px; align-content: start; }
.first { grid-column-start: 1; }
.pagebar { margin-left: 1px; }
.pagebar i { flex: 0 0 131px; }

/* country lookup */
.popup { position: absolute; top: 165px; left: 362px; right: 0; padding: 0 3px 3px; background: #f0f0f0; border: 1px solid #1e8cff; }
.popup .field label { height: 18px; line-height: 22px; }
.popup .focus { background: #ffffe0; border-color: var(--sky); }
.focus input::placeholder { color: #999; font-style: italic; opacity: 1; }
.lookup { margin-top: 6px; border: 1px solid #cdcdcd; background: #fcfcfc; }
.lrow { display: flex; padding-bottom: 6px; }
.countries { flex: 1; width: 0; }
.countries th, .countries td { height: 22px; padding: 1px 0 0 5px; border-right: 1px solid #cdcdcd; border-bottom: 1px solid #d4d4d4; font-weight: 400; text-align: left; white-space: nowrap; overflow: hidden; }
.countries th { background: #f0f0f0; color: var(--label); border-bottom: 0; }
.countries th:last-child, .countries td:last-child { border-right: 0; }
.w78 { width: 78px; } .w51 { width: 51px; } .w56 { width: 56px; } .w57 { width: 57px; }
.w28 { width: 28px; } .w43 { width: 43px; } .w66 { width: 66px; }
.picked { background: #cceffb; outline: 3px solid #ed1c24; outline-offset: -1px; }
.picked td:first-child { background: #b3e7fa; border-right: 1px dotted #000; }
.mid { width: 16px; }
.mid i { flex: none; height: 17px; margin-top: 52px; }
.hbar { height: 16px; display: flex; align-items: center; background: #f0f0f0; color: #555; }
.hbar i { width: 17px; height: 15px; background: #cdcdcd; margin-left: 4px; }
.hbar .lt { transform: rotate(-90deg); margin-left: 4px; }
.hbar .rt { transform: rotate(90deg); }
.hbar .dn { margin: 0 4px 0 9px; }
```
